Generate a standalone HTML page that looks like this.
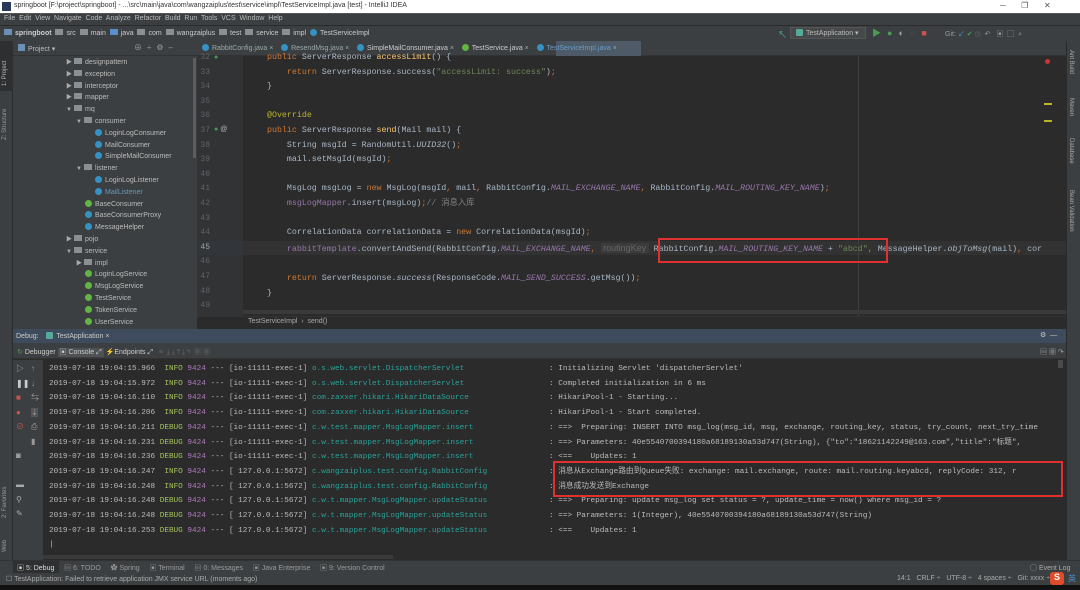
<!DOCTYPE html>
<html><head><meta charset="utf-8"><style>
*{margin:0;padding:0;box-sizing:border-box}
body{width:1080px;height:590px;overflow:hidden;background:#2b2b2b;font-family:"Liberation Sans","Noto Sans CJK SC",sans-serif;position:relative;color:#bbb}
.a{position:absolute;white-space:pre}
.s{font-size:7px;color:#bbb}
.m{font-family:"Liberation Mono","Noto Sans CJK SC",monospace}
.code{font-size:8.3px;color:#a9b7c6;line-height:14.6px}
.k{color:#cc7832}.st{color:#6a8759}.p{color:#9876aa;font-style:italic}.an{color:#bbb529}.f{color:#9876aa}.fn{color:#ffc66d}
.con{font-size:7.7px;line-height:14.7px;color:#bbb}
.i{color:#a5c25c}.d{color:#a5c25c}.pid{color:#b07bc0}.lg{color:#2aa198}
.ic{display:inline-block;width:7px;height:7px;border-radius:50%;vertical-align:-1px;margin-right:3px}
.fo{display:inline-block;width:8px;height:6px;background:#8a8f94;vertical-align:0;margin-right:3px}
.tri{display:inline-block;width:8px;font-size:6px;color:#aaa}
.tree{white-space:normal}
.tree div{height:11.8px;white-space:nowrap}
</style></head><body>
<!-- title bar -->
<div class="a" style="left:0;top:0;width:1080px;height:13px;background:#fff"></div>
<div class="a" style="left:2px;top:2px;width:9px;height:9px;background:#2a3a5a"></div>
<div class="a" style="left:14px;top:2px;font-size:7px;color:#333">springboot [F:\project\springboot] - ...\src\main\java\com\wangzaiplus\test\service\impl\TestServiceImpl.java [test] - IntelliJ IDEA</div>
<div class="a" style="left:1000px;top:1px;font-size:8px;color:#555">─&nbsp;&nbsp;&nbsp;&nbsp;&nbsp;&nbsp;&nbsp;❐&nbsp;&nbsp;&nbsp;&nbsp;&nbsp;&nbsp;&nbsp;✕</div>
<!-- menu -->
<div class="a" style="left:0;top:13px;width:1080px;height:12px;background:#3c3f41;border-top:1px solid #555"></div>
<div class="a s" style="left:4px;top:15px;color:#bbb">File  Edit  View  Navigate  Code  Analyze  Refactor  Build  Run  Tools  VCS  Window  Help</div>
<!-- nav bar -->
<div class="a" style="left:0;top:25px;width:1080px;height:16px;background:#3c3f41;border-top:1px solid #2b2b2b"></div>
<div class="a s" style="left:4px;top:29px;color:#ccc"><span class="fo" style="background:#6b8fb5"></span><b>springboot</b>  <span class="fo"></span>src  <span class="fo"></span>main  <span class="fo" style="background:#5a8fc9"></span>java  <span class="fo"></span>com  <span class="fo"></span>wangzaiplus  <span class="fo"></span>test  <span class="fo"></span>service  <span class="fo"></span>impl  <span class="ic" style="background:#3592c4"></span>TestServiceImpl</div>
<div class="a" style="left:778px;top:28px;width:10px;height:10px;color:#5a9;font-size:9px">↖</div>
<div class="a" style="left:790px;top:27px;width:76px;height:12px;border:1px solid #555;background:#45494a"></div>
<div class="a s" style="left:796px;top:29px"><span class="ic" style="background:#5a9;border-radius:1px"></span>TestApplication ▾</div>
<div class="a" style="left:872px;top:26px;font-size:9px;letter-spacing:6px"><span style="color:#499c54">▶</span><span style="color:#499c54">●</span><span style="color:#aaa">◐</span><span style="color:#555">○</span><span style="color:#c75450">■</span></div>
<div class="a s" style="left:945px;top:29px;color:#999">Git: <span style="color:#4a8ec6">↙</span> <span style="color:#499c54">✔</span> <span style="color:#666">◷</span>  ↶   ▣  ▢  ⌕</div>
<!-- left stripe -->
<div class="a" style="left:0;top:41px;width:13px;height:520px;background:#3c3f41;border-right:1px solid #2b2b2b"></div>
<div class="a" style="left:0;top:41px;width:13px;height:50px;background:#2d2f30"></div>
<div class="a" style="left:2px;top:86px;font-size:6px;color:#bbb;transform:rotate(-90deg);transform-origin:0 0">1: Project</div>
<div class="a" style="left:2px;top:140px;font-size:6px;color:#999;transform:rotate(-90deg);transform-origin:0 0">Z: Structure</div>
<div class="a" style="left:2px;top:518px;font-size:6px;color:#999;transform:rotate(-90deg);transform-origin:0 0">2: Favorites</div>
<div class="a" style="left:2px;top:552px;font-size:6px;color:#999;transform:rotate(-90deg);transform-origin:0 0">Web</div>
<!-- project panel -->
<div class="a" style="left:13px;top:41px;width:184px;height:288px;background:#3c3f41"></div>
<div class="a" style="left:13px;top:41px;width:184px;height:15px;background:#3c3f41;border-bottom:1px solid #323232"></div>
<div class="a s" style="left:18px;top:44px"><span class="fo" style="background:#6b8fb5;width:7px;height:7px"></span>Project ▾</div>
<div class="a" style="left:134px;top:42px;font-size:8px;color:#999;letter-spacing:5px">⊕÷⚙–</div>
<div class="a" style="left:193px;top:58px;width:3px;height:100px;background:#5b5e60"></div>
<div class="a s tree" style="left:0;top:57px;line-height:11.8px;color:#bbb;width:190px">
<div style="padding-left:66px"><span class="tri">▶</span><span class="fo"></span>designpattern</div>
<div style="padding-left:66px"><span class="tri">▶</span><span class="fo"></span>exception</div>
<div style="padding-left:66px"><span class="tri">▶</span><span class="fo"></span>interceptor</div>
<div style="padding-left:66px"><span class="tri">▶</span><span class="fo"></span>mapper</div>
<div style="padding-left:66px"><span class="tri">▼</span><span class="fo"></span>mq</div>
<div style="padding-left:76px"><span class="tri">▼</span><span class="fo"></span>consumer</div>
<div style="padding-left:95px"><span class="ic" style="background:#3592c4"></span>LoginLogConsumer</div>
<div style="padding-left:95px"><span class="ic" style="background:#3592c4"></span>MailConsumer</div>
<div style="padding-left:95px"><span class="ic" style="background:#3592c4"></span>SimpleMailConsumer</div>
<div style="padding-left:76px"><span class="tri">▼</span><span class="fo"></span>listener</div>
<div style="padding-left:95px"><span class="ic" style="background:#3592c4"></span>LoginLogListener</div>
<div style="padding-left:95px;color:#6897bb"><span class="ic" style="background:#3592c4"></span>MailListener</div>
<div style="padding-left:85px"><span class="ic" style="background:#62b543"></span>BaseConsumer</div>
<div style="padding-left:85px"><span class="ic" style="background:#3592c4"></span>BaseConsumerProxy</div>
<div style="padding-left:85px"><span class="ic" style="background:#3592c4"></span>MessageHelper</div>
<div style="padding-left:66px"><span class="tri">▶</span><span class="fo"></span>pojo</div>
<div style="padding-left:66px"><span class="tri">▼</span><span class="fo"></span>service</div>
<div style="padding-left:76px"><span class="tri">▶</span><span class="fo"></span>impl</div>
<div style="padding-left:85px"><span class="ic" style="background:#62b543"></span>LoginLogService</div>
<div style="padding-left:85px"><span class="ic" style="background:#62b543"></span>MsgLogService</div>
<div style="padding-left:85px"><span class="ic" style="background:#62b543"></span>TestService</div>
<div style="padding-left:85px"><span class="ic" style="background:#62b543"></span>TokenService</div>
<div style="padding-left:85px"><span class="ic" style="background:#62b543"></span>UserService</div>
</div>
<!-- editor tabs -->
<div class="a" style="left:197px;top:41px;width:869px;height:15px;background:#3c3f41;border-bottom:1px solid #323232"></div>
<div class="a" style="left:556px;top:41px;width:85px;height:15px;background:#4e5a67"></div>
<div class="a s" style="left:202px;top:44px;color:#9aa"><span class="ic" style="background:#3592c4"></span>RabbitConfig.java ×    <span class="ic" style="background:#3592c4"></span>ResendMsg.java ×    <span class="ic" style="background:#3592c4"></span><span style="color:#ccc">SimpleMailConsumer.java</span> ×    <span class="ic" style="background:#62b543"></span><span style="color:#ccc">TestService.java</span> ×    <span class="ic" style="background:#3592c4"></span><span style="color:#6a9ec8">TestServiceImpl.java</span> ×</div>
<!-- gutter -->
<div class="a" style="left:197px;top:56px;width:46px;height:260px;background:#313335"></div>
<div class="a" style="left:197px;top:241px;width:46px;height:14px;background:#32363b"></div>
<div class="a" style="left:243px;top:241px;width:823px;height:14px;background:#323232"></div>
<div class="a" style="left:858px;top:56px;width:1px;height:260px;background:#3d3d3d"></div>
<div class="a m code" style="left:198px;top:51px;color:#606366;text-align:right;width:12px;font-size:8px">32
33
34
35
36
37
38
39
40
41
42
43
44
<span style="color:#a4a3a3">45</span>
46
47
48
49</div>
<div class="a" style="left:214px;top:54px;font-size:7px;color:#499c54">●</div>
<div class="a" style="left:214px;top:126px;font-size:7px;color:#499c54">● <span style="color:#bbb">@</span></div>
<div class="a m code" style="left:267px;top:51px"><span class="k">public </span>ServerResponse <span class="fn">accessLimit</span>() {
    <span class="k">return </span>ServerResponse.success(<span class="st">"accessLimit: success"</span>)<span class="k">;</span>
}

<span class="an">@Override</span>
<span class="k">public </span>ServerResponse <span class="fn">send</span>(Mail mail) {
    String msgId = RandomUtil.<i>UUID32</i>()<span class="k">;</span>
    mail.setMsgId(msgId)<span class="k">;</span>

    MsgLog msgLog = <span class="k">new </span>MsgLog(msgId<span class="k">, </span>mail<span class="k">, </span>RabbitConfig.<span class="p">MAIL_EXCHANGE_NAME</span><span class="k">, </span>RabbitConfig.<span class="p">MAIL_ROUTING_KEY_NAME</span>)<span class="k">;</span>
    <span class="f">msgLogMapper</span>.insert(msgLog)<span class="k">;</span><span style="color:#808080">// 消息入库</span>

    CorrelationData correlationData = <span class="k">new </span>CorrelationData(msgId)<span class="k">;</span>
    <span class="f">rabbitTemplate</span>.convertAndSend(RabbitConfig.<span class="p">MAIL_EXCHANGE_NAME</span><span class="k">, </span><span style="font-family:'Liberation Sans';font-size:9px;color:#666;background:#3b3b3b"> routingKey </span> RabbitConfig.<span class="p">MAIL_ROUTING_KEY_NAME</span> + <span class="st">"abcd"</span><span class="k">, </span>MessageHelper.<i>objToMsg</i>(mail)<span class="k">, </span>corre

    <span class="k">return </span>ServerResponse.<i>success</i>(ResponseCode.<span class="p">MAIL_SEND_SUCCESS</span>.getMsg())<span class="k">;</span>
}</div>
<div class="a" style="left:1043px;top:241px;width:23px;height:14px;background:#323232"></div>
<div class="a" style="left:658px;top:238px;width:230px;height:25px;border:2px solid #e03030"></div>
<div class="a" style="left:243px;top:310px;width:823px;height:4px;background:#3a3a3a"></div>
<div class="a" style="left:197px;top:316px;width:869px;height:13px;background:#2b2b2b;border-top:1px solid #323232"></div>
<div class="a s" style="left:248px;top:318px;color:#aaa">TestServiceImpl  ›  send()</div>
<!-- right stripe -->
<div class="a" style="left:1066px;top:41px;width:14px;height:520px;background:#3c3f41;border-left:1px solid #2b2b2b"></div>
<div class="a" style="left:1068px;top:50px;font-size:6px;color:#aaa;writing-mode:vertical-rl">Ant Build</div>
<div class="a" style="left:1068px;top:98px;font-size:6px;color:#aaa;writing-mode:vertical-rl">Maven</div>
<div class="a" style="left:1068px;top:138px;font-size:6px;color:#aaa;writing-mode:vertical-rl">Database</div>
<div class="a" style="left:1068px;top:190px;font-size:6px;color:#aaa;writing-mode:vertical-rl">Bean Validation</div>
<div class="a" style="left:1044px;top:103px;width:8px;height:2px;background:#bbb529"></div>
<div class="a" style="left:1044px;top:120px;width:8px;height:2px;background:#bbb529"></div>
<div class="a" style="left:1045px;top:59px;width:5px;height:5px;background:#c33;border-radius:50%"></div>
<!-- debug header -->
<div class="a" style="left:13px;top:329px;width:1053px;height:14px;background:#3d4b5c"></div>
<div class="a s" style="left:16px;top:332px;color:#ccc">Debug:    <span class="ic" style="background:#5a9;border-radius:1px"></span>TestApplication ×</div>
<div class="a s" style="left:1040px;top:331px;color:#ccc">⚙  —</div>
<div class="a" style="left:13px;top:343px;width:1053px;height:16px;background:#3c3f41;border-bottom:1px solid #323232"></div>
<div class="a s" style="left:17px;top:347px;color:#ccc"><span style="color:#499c54">↻</span> Debugger <span style="background:#4e5254;padding:1px 2px">▣ Console ⤢</span> <span style="color:#c75">⚡</span>Endpoints ⤢   <span style="color:#666">≡  ⤓ ⤓ ⤒ ⤓ ↰  ▦ ▦</span></div>
<div class="a s" style="left:1040px;top:347px;color:#aaa">▤ ▦ ↷</div>
<!-- debug left icons -->
<div class="a" style="left:13px;top:360px;width:30px;height:200px;background:#3c3f41"></div>
<div class="a" style="left:16px;top:362px;font-size:8px;line-height:14.5px;color:#aaa">▷
<span style="color:#ccc">❚❚</span>
<span style="color:#c75450">■</span>
<span style="color:#c75450">●</span>
<span style="color:#c75450">⊘</span>

<span>◙</span>

<span>▬</span>
<span>⚲</span>
<span>✎</span></div>
<div class="a" style="left:31px;top:362px;font-size:8px;line-height:14.5px;color:#999">↑
↓
⇆
<span style="background:#555">⇣</span>
⎙
▮</div>
<!-- console -->
<div class="a" style="left:43px;top:360px;width:1023px;height:200px;background:#2b2b2b"></div>
<div class="a" style="left:1058px;top:360px;width:5px;height:8px;background:#4a4a4a"></div>
<div class="a m con" style="left:49px;top:362px">2019-07-18 19:04:15.966  <span class="i">INFO</span> <span class="pid">9424</span> --- [io-11111-exec-1] <span class="lg">o.s.web.servlet.DispatcherServlet</span>
2019-07-18 19:04:15.972  <span class="i">INFO</span> <span class="pid">9424</span> --- [io-11111-exec-1] <span class="lg">o.s.web.servlet.DispatcherServlet</span>
2019-07-18 19:04:16.110  <span class="i">INFO</span> <span class="pid">9424</span> --- [io-11111-exec-1] <span class="lg">com.zaxxer.hikari.HikariDataSource</span>
2019-07-18 19:04:16.206  <span class="i">INFO</span> <span class="pid">9424</span> --- [io-11111-exec-1] <span class="lg">com.zaxxer.hikari.HikariDataSource</span>
2019-07-18 19:04:16.211 <span class="d">DEBUG</span> <span class="pid">9424</span> --- [io-11111-exec-1] <span class="lg">c.w.test.mapper.MsgLogMapper.insert</span>
2019-07-18 19:04:16.231 <span class="d">DEBUG</span> <span class="pid">9424</span> --- [io-11111-exec-1] <span class="lg">c.w.test.mapper.MsgLogMapper.insert</span>
2019-07-18 19:04:16.236 <span class="d">DEBUG</span> <span class="pid">9424</span> --- [io-11111-exec-1] <span class="lg">c.w.test.mapper.MsgLogMapper.insert</span>
2019-07-18 19:04:16.247  <span class="i">INFO</span> <span class="pid">9424</span> --- [ 127.0.0.1:5672] <span class="lg">c.wangzaiplus.test.config.RabbitConfig</span>
2019-07-18 19:04:16.248  <span class="i">INFO</span> <span class="pid">9424</span> --- [ 127.0.0.1:5672] <span class="lg">c.wangzaiplus.test.config.RabbitConfig</span>
2019-07-18 19:04:16.248 <span class="d">DEBUG</span> <span class="pid">9424</span> --- [ 127.0.0.1:5672] <span class="lg">c.w.t.mapper.MsgLogMapper.updateStatus</span>
2019-07-18 19:04:16.248 <span class="d">DEBUG</span> <span class="pid">9424</span> --- [ 127.0.0.1:5672] <span class="lg">c.w.t.mapper.MsgLogMapper.updateStatus</span>
2019-07-18 19:04:16.253 <span class="d">DEBUG</span> <span class="pid">9424</span> --- [ 127.0.0.1:5672] <span class="lg">c.w.t.mapper.MsgLogMapper.updateStatus</span>
|</div>
<div class="a m con" style="left:549px;top:362px;width:510px;overflow:hidden">: Initializing Servlet 'dispatcherServlet'
: Completed initialization in 6 ms
: HikariPool-1 - Starting...
: HikariPool-1 - Start completed.
: ==>  Preparing: INSERT INTO msg_log(msg_id, msg, exchange, routing_key, status, try_count, next_try_time
: ==> Parameters: 40e5540700394180a68189130a53d747(String), {"to":"18621142249@163.com","title":"标题",
: <==    Updates: 1
: 消息从Exchange路由到Queue失败: exchange: mail.exchange, route: mail.routing.keyabcd, replyCode: 312, r
: 消息成功发送到Exchange
: ==>  Preparing: update msg_log set status = ?, update_time = now() where msg_id = ?
: ==> Parameters: 1(Integer), 40e5540700394180a68189130a53d747(String)
: <==    Updates: 1</div>
<div class="a" style="left:553px;top:461px;width:510px;height:36px;border:2px solid #e03030"></div>
<div class="a" style="left:43px;top:555px;width:350px;height:4px;background:#3a3a3a"></div>
<!-- bottom tabs -->
<div class="a" style="left:0;top:560px;width:1080px;height:14px;background:#3c3f41;border-top:1px solid #323232"></div>
<div class="a" style="left:13px;top:561px;width:46px;height:12px;background:#2d2f30"></div>
<div class="a s" style="left:17px;top:563px;color:#999"><span style="color:#ddd">▣ 5: Debug</span>     ▤ 6: TODO     ✿ Spring     ▣ Terminal     ▤ 0: Messages     ▣ Java Enterprise     ▣ 9: Version Control</div>
<div class="a s" style="left:1030px;top:563px;color:#aaa">◯ Event Log</div>
<div class="a" style="left:0;top:574px;width:1080px;height:11px;background:#3c3f41"></div>
<div class="a s" style="left:6px;top:575px;color:#aaa">☐ TestApplication: Failed to retrieve application JMX service URL (moments ago)</div>
<div class="a s" style="left:897px;top:575px;color:#aaa">14:1   CRLF ÷   UTF-8 ÷   4 spaces ÷   Git: xxxx ÷</div>
<div class="a" style="left:1050px;top:572px;width:14px;height:13px;background:#e04b2a;border-radius:3px;color:#fff;font-size:9px;text-align:center;font-weight:bold">S</div>
<div class="a" style="left:1068px;top:573px;font-size:8px;color:#4a90d0">英</div>
<div class="a" style="left:0;top:585px;width:1080px;height:5px;background:#111"></div>
</body></html>
